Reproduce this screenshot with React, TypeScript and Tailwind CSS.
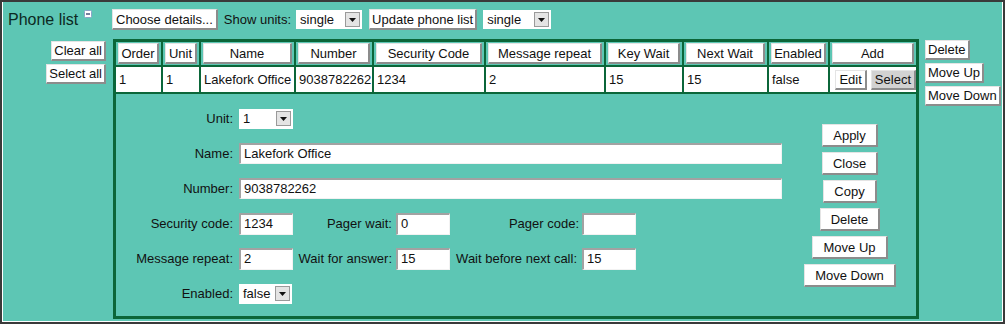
import React from "react";

const teal = "bg-[#5dc6b4]";

interface BtnProps {
  children: React.ReactNode;
  className?: string;
  gray?: boolean;
}

const Btn: React.FC<BtnProps> = ({ children, className = "", gray = false }) => (
  <button
    className={`border border-r-2 border-b-2 border-t-[#e4e4e4] border-l-[#e4e4e4] border-r-[#8c8c8c] border-b-[#8c8c8c] leading-none whitespace-nowrap text-[13px] text-[#111] ${
      gray ? "bg-[#d2d2d2]" : "bg-white"
    } ${className}`}
  >
    {children}
  </button>
);

const Arrow = () => (
  <span className="w-[15px] h-[15px] bg-[#e4e4e4] border border-[#9a9a9a] flex items-center justify-center shrink-0">
    <svg width="7" height="4" viewBox="0 0 7 4">
      <path d="M0 0h7L3.5 4z" fill="#111" />
    </svg>
  </span>
);

const Sel: React.FC<{ value: string; className: string }> = ({ value, className }) => (
  <div className={`flex items-center justify-between bg-white pl-[4px] pr-[2px] ${className}`}>
    <span>{value}</span>
    <Arrow />
  </div>
);

const Inp: React.FC<{ value: string; className: string }> = ({ value, className }) => (
  <div
    className={`bg-white border-t-2 border-l-2 border-t-[#a2a2a2] border-l-[#a2a2a2] border-r border-b border-r-[#f2f2f2] border-b-[#f2f2f2] pl-[3px] flex items-center ${className}`}
  >
    {value}
  </div>
);

const headers: [string, string][] = [
  ["Order", "w-[45px]"],
  ["Unit", "w-[36px]"],
  ["Name", "w-[93px]"],
  ["Number", "w-[76px]"],
  ["Security Code", "w-[110px]"],
  ["Message repeat", "w-[118px]"],
  ["Key Wait", "w-[76px]"],
  ["Next Wait", "w-[83px]"],
  ["Enabled", "w-[59px]"],
  ["Add", "w-[86px]"],
];

const row = ["1", "1", "Lakefork Office", "9038782262", "1234", "2", "15", "15", "false"];

export default function App() {
  return (
    <div
      className={`w-[1005px] h-[324px] border-2 border-[#3a3a3a] ${teal} text-[13px] text-[#111] overflow-hidden`}
      style={{ fontFamily: '"Liberation Sans", Arial, sans-serif' }}
    >
      <div className="h-full border-l border-r border-b border-white pl-[5px] pt-[6px]">
        {/* title bar */}
        <div className="flex items-center h-[23px]">
          <span className="text-[16px] shrink-0 whitespace-nowrap w-[71px] text-[#0c2a22]">Phone list</span>
          <svg width="8" height="8" viewBox="0 0 8 8" className="self-start mt-[2px] ml-[5px] shrink-0">
            <rect x="0.5" y="0.5" width="7" height="7" rx="1" fill="#fff" stroke="#8aa4c8" />
            <path d="M2 4h4" stroke="#1a2a5a" strokeWidth="1.2" />
          </svg>
          <Btn className="ml-[20px] h-[21px] px-[3px]">Choose details...</Btn>
          <span className="ml-[6px] whitespace-nowrap">Show units:</span>
          <Sel value="single" className="ml-[5px] w-[66px] h-[19px]" />
          <Btn className="ml-[7px] h-[21px] px-[2px]">Update phone list</Btn>
          <Sel value="single" className="ml-[6px] w-[68px] h-[19px]" />
        </div>

        <div className="flex mt-[8px]">
          {/* left buttons */}
          <div className="w-[105px] flex flex-col items-end gap-[3px] pr-[7px] pt-[2px]">
            <Btn className="h-[20px] px-[2px]">Clear all</Btn>
            <Btn className="h-[20px] px-[2px]">Select all</Btn>
          </div>

          <table className="table-fixed border-separate border-spacing-[2px] bg-[#0b6639] border border-[#0b6639] w-[806px]">
            <thead>
              <tr>
                {headers.map(([h, w]) => (
                  <th key={h} className={`${w} ${teal} h-[23px] px-[2px] py-[1px] font-normal`}>
                    <Btn className="w-full h-[21px] px-0">{h}</Btn>
                  </th>
                ))}
              </tr>
            </thead>
            <tbody>
              <tr>
                {row.map((v, i) => (
                  <td key={i} className="bg-white h-[25px] px-[3px] whitespace-nowrap">
                    {v}
                  </td>
                ))}
                <td className="bg-white h-[25px] p-0">
                  <div className="flex justify-end gap-[4px]">
                    <Btn className="h-[20px] px-[3px]">Edit</Btn>
                    <Btn gray className="h-[20px] px-[3px]">
                      Select
                    </Btn>
                  </div>
                </td>
              </tr>
              <tr>
                <td colSpan={10} className={`${teal} h-[222px] p-0 align-top`}>
                  <div className="flex">
                    <div className="grid grid-cols-[123px_57px_100px_57px_129px_54px] auto-rows-[35px] items-center pt-[7px] w-[666px]">
                      <span className="text-right pr-[6px]">Unit:</span>
                      <div className="col-span-5">
                        <Sel value="1" className="w-[54px] h-[20px]" />
                      </div>

                      <span className="text-right pr-[6px]">Name:</span>
                      <div className="col-span-5">
                        <Inp value="Lakefork Office" className="w-[543px] h-[21px]" />
                      </div>

                      <span className="text-right pr-[6px]">Number:</span>
                      <div className="col-span-5">
                        <Inp value="9038782262" className="w-[543px] h-[21px]" />
                      </div>

                      <span className="text-right pr-[6px]">Security code:</span>
                      <Inp value="1234" className="w-[54px] h-[22px]" />
                      <span className="text-right pr-[4px]">Pager wait:</span>
                      <Inp value="0" className="w-[54px] h-[22px]" />
                      <span className="text-right pr-[3px]">Pager code:</span>
                      <Inp value="" className="w-[54px] h-[22px]" />

                      <span className="text-right pr-[6px]">Message repeat:</span>
                      <Inp value="2" className="w-[54px] h-[22px]" />
                      <span className="text-right pr-[4px]">Wait for answer:</span>
                      <Inp value="15" className="w-[54px] h-[22px]" />
                      <span className="text-right pr-[5px]">Wait before next call:</span>
                      <Inp value="15" className="w-[54px] h-[22px]" />

                      <span className="text-right pr-[6px]">Enabled:</span>
                      <div className="col-span-5">
                        <Sel value="false" className="w-[53px] h-[20px]" />
                      </div>
                    </div>

                    <div className="w-[90px] ml-[23px] flex flex-col items-center gap-[5px] pt-[30px]">
                      <Btn className="h-[23px] px-[10px]">Apply</Btn>
                      <Btn className="h-[23px] px-[10px]">Close</Btn>
                      <Btn className="h-[23px] px-[10px]">Copy</Btn>
                      <Btn className="h-[23px] px-[10px]">Delete</Btn>
                      <Btn className="h-[23px] px-[10px]">Move Up</Btn>
                      <Btn className="h-[23px] px-[10px]">Move Down</Btn>
                    </div>
                  </div>
                </td>
              </tr>
            </tbody>
          </table>

          {/* right buttons */}
          <div className="flex flex-col items-start gap-[3px] pl-[6px] pt-[1px]">
            <Btn className="h-[20px] px-[2px]">Delete</Btn>
            <Btn className="h-[20px] px-[2px]">Move Up</Btn>
            <Btn className="h-[20px] px-[2px]">Move Down</Btn>
          </div>
        </div>
      </div>
    </div>
  );
}
